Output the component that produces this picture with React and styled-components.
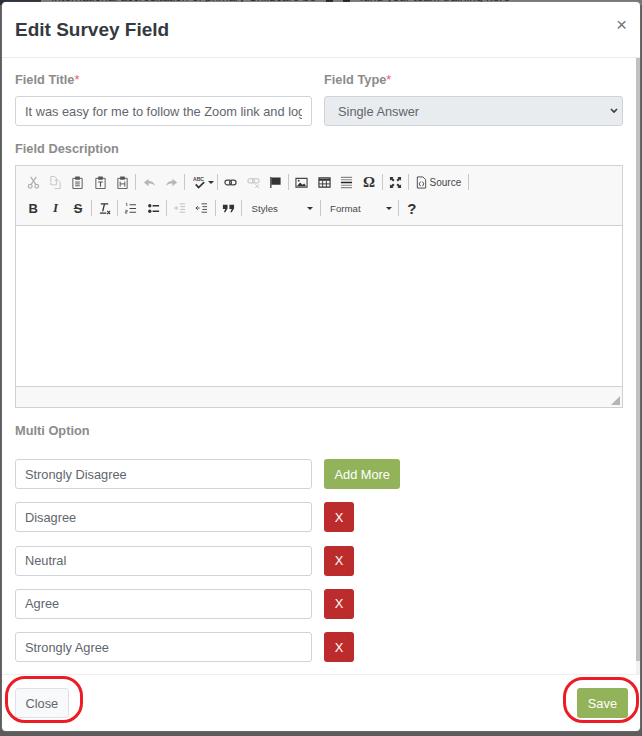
import styled, { createGlobalStyle } from "styled-components";

const GlobalStyle = createGlobalStyle`
    * {
        box-sizing: border-box;
    }
    html, body {
        margin: 0;
        padding: 0;
        height: 736px;
        overflow: hidden;
        background: #5c5c5c;
        font-family: 'Liberation Sans', Arial, sans-serif;
    }
`;

const options = ["Strongly Disagree", "Disagree", "Neutral", "Agree", "Strongly Agree"];

function Tool({ children, faded }) {
    return (
        <ToolSlot>
            <ToolIcon viewBox="0 0 14 14" $faded={faded}>
                {children}
            </ToolIcon>
        </ToolSlot>
    );
}

function Paste({ mark }) {
    return (
        <Tool>
            <path d="M2 2.500h10v11H2z" fill="none" stroke="#555" />
            <path d="M4.500 .5h5v3.500h-5z" fill="#555" />
            {mark}
        </Tool>
    );
}

export default function App() {
    return (
        <Page>
            <GlobalStyle />
            <Backdrop>
                <DarkCorner />
                <BackdropText>International accreditation of primary Childcare be</BackdropText>
                <BackdropMark />
                <BackdropMark />
                <BackdropText>fund your team training here</BackdropText>
            </Backdrop>
            <Modal>
                <Header>
                    <Title>Edit Survey Field</Title>
                    <CloseX>×</CloseX>
                </Header>
                <Body>
                    <Content>
                        <TopRow>
                            <TitleGroup>
                                <Label>Field Title<Star>*</Star></Label>
                                <TextInput readOnly value="It was easy for me to follow the Zoom link and log in to the session" />
                            </TitleGroup>
                            <TypeGroup>
                                <Label>Field Type<Star>*</Star></Label>
                                <SelectBox>
                                    <span>Single Answer</span>
                                    <svg width="8" height="6" viewBox="0 0 8 6">
                                        <path d="M1 1l3 3 3-3" fill="none" stroke="#343a40" strokeWidth="1.600" />
                                    </svg>
                                </SelectBox>
                            </TypeGroup>
                        </TopRow>
                        <Label>Field Description</Label>
                        <Editor>
                            <Toolbar>
                                <ToolRow>
                                    <Tool faded>
                                        <path d="M4 1l5.500 8M10 1L4.500 9" stroke="#444" strokeWidth="1.300" />
                                        <circle cx="3.500" cy="11" r="2" fill="none" stroke="#444" strokeWidth="1.300" />
                                        <circle cx="10.500" cy="11" r="2" fill="none" stroke="#444" strokeWidth="1.300" />
                                    </Tool>
                                    <Tool faded>
                                        <path d="M2 .5h4l2 2v7H2zM6 4.500h3.500l2.500 2.500v6.500H6" fill="none" stroke="#777" />
                                    </Tool>
                                    <Paste mark={<path d="M4.500 6.500h5M4.500 8.500h5M4.500 10.500h5" stroke="#555" />} />
                                    <Paste mark={<path d="M4.500 6.500h5M7 6.500v5" stroke="#555" strokeWidth="1.200" />} />
                                    <Paste mark={<path d="M4.500 6v5.500M9.500 6v5.500M4.500 8.500h5" stroke="#555" />} />
                                    <Separator />
                                    <Tool faded>
                                        <path d="M1 7l5-4v2.500c4 0 6 2 7 5-2-2-4-2.500-7-2.500V11z" fill="#555" />
                                    </Tool>
                                    <Tool faded>
                                        <path d="M13 7L8 3v2.500c-4 0-6 2-7 5 2-2 4-2.500 7-2.500V11z" fill="#555" />
                                    </Tool>
                                    <Separator />
                                    <SpellSlot>
                                        <ToolIcon viewBox="0 0 14 14">
                                            <text x="0" y="5" fontSize="5.500" fontWeight="700" fill="#444" fontFamily="Liberation Sans, sans-serif">ABC</text>
                                            <path d="M3 9l3 3.500L12 6.500" fill="none" stroke="#333" strokeWidth="1.800" />
                                        </ToolIcon>
                                        <Caret />
                                    </SpellSlot>
                                    <Separator />
                                    <Tool>
                                        <rect x="1" y="4.500" width="7" height="5" rx="2.500" fill="none" stroke="#444" strokeWidth="1.300" />
                                        <rect x="6" y="4.500" width="7" height="5" rx="2.500" fill="none" stroke="#444" strokeWidth="1.300" />
                                    </Tool>
                                    <Tool faded>
                                        <rect x="1" y="3" width="7" height="4.500" rx="2" fill="none" stroke="#777" strokeWidth="1.200" />
                                        <rect x="6" y="3" width="7" height="4.500" rx="2" fill="none" stroke="#777" strokeWidth="1.200" />
                                        <path d="M9 9l4 4M13 9l-4 4" stroke="#777" />
                                    </Tool>
                                    <Tool>
                                        <path d="M2 1v12" stroke="#333" strokeWidth="1.300" />
                                        <path d="M2.500 1.500h10v8h-10z" fill="#333" />
                                    </Tool>
                                    <Separator />
                                    <Tool>
                                        <path d="M1 2.500h12v9.500H1z" fill="none" stroke="#444" strokeWidth="1.200" />
                                        <path d="M2 11l3.500-4 2.500 2.500 2-1.500 2 3z" fill="#333" />
                                        <circle cx="4" cy="5" r="1" fill="#333" />
                                    </Tool>
                                    <Tool>
                                        <path d="M1 2h12v10H1z" fill="none" stroke="#333" strokeWidth="1.200" />
                                        <path d="M1 3h12v2H1z" fill="#333" />
                                        <path d="M1 8.500h12M5 5v7M9 5v7" stroke="#333" />
                                    </Tool>
                                    <Tool>
                                        <path d="M1 1.500h12M1 4h12" stroke="#888" strokeWidth="1.200" />
                                        <path d="M1 7h12" stroke="#222" strokeWidth="1.600" />
                                        <path d="M1 10h12M1 12.500h12" stroke="#888" strokeWidth="1.200" />
                                    </Tool>
                                    <OmegaGlyph>Ω</OmegaGlyph>
                                    <Separator />
                                    <Tool>
                                        <path d="M1 1h4L3.800 2.200 6 4.400 4.400 6 2.200 3.800 1 5zM13 1v4l-1.200-1.200L9.600 6 8 4.400l2.200-2.200L9 1zM1 13V9l1.200 1.200L4.400 8 6 9.600l-2.200 2.200L5 13zM13 13H9l1.200-1.200L8 9.600 9.600 8l2.200 2.200L13 9z" fill="#333" />
                                    </Tool>
                                    <Separator />
                                    <SourceSlot>
                                        <ToolIcon viewBox="0 0 14 14">
                                            <path d="M2.500 1h6l3 3v9h-9z" fill="none" stroke="#444" />
                                            <path d="M6 6L4.500 8.500 6 11M8 6l1.500 2.500L8 11" fill="none" stroke="#444" />
                                        </ToolIcon>
                                        <SourceLabel>Source</SourceLabel>
                                    </SourceSlot>
                                    <Separator />
                                </ToolRow>
                                <ToolRow>
                                    <LetterTool>B</LetterTool>
                                    <LetterTool $italic>I</LetterTool>
                                    <LetterTool $strike>S</LetterTool>
                                    <Separator />
                                    <Tool>
                                        <path d="M3 2h8M7 2L5 10M2 12h7" fill="none" stroke="#333" strokeWidth="1.400" />
                                        <path d="M10 9.500l3 3.500M13 9.500l-3 3.500" stroke="#333" strokeWidth="1.100" />
                                    </Tool>
                                    <Separator />
                                    <Tool>
                                        <path d="M6 3h7M6 7h7M6 11h7" stroke="#444" strokeWidth="1.200" />
                                        <path d="M2 1.500h1v3M1.500 9h2v1.500h-2V12h2" fill="none" stroke="#444" strokeWidth=".8" />
                                    </Tool>
                                    <Tool>
                                        <path d="M6 4h7M6 10h7" stroke="#333" strokeWidth="1.500" />
                                        <circle cx="3" cy="4" r="1.800" fill="#333" />
                                        <circle cx="3" cy="10" r="1.800" fill="#333" />
                                    </Tool>
                                    <Separator />
                                    <Tool faded>
                                        <path d="M7 2h6M8 5h5M8 8h5M7 11h6M1 6.500h4M3 4.500l2 2-2 2" fill="none" stroke="#666" />
                                    </Tool>
                                    <Tool>
                                        <path d="M7 2h6M8 5h5M8 8h5M7 11h6M1 6.500h4M3 4.500l-2 2 2 2" fill="none" stroke="#444" />
                                    </Tool>
                                    <Separator />
                                    <Tool>
                                        <path d="M1 3h5v4L3.500 11H2l1.500-3.500H1zM8 3h5v4l-2.500 4H9l1.500-3.500H8z" fill="#333" />
                                    </Tool>
                                    <Separator />
                                    <Combo>
                                        <ComboLabel>Styles</ComboLabel>
                                        <Caret />
                                    </Combo>
                                    <Separator />
                                    <Combo>
                                        <ComboLabel>Format</ComboLabel>
                                        <Caret />
                                    </Combo>
                                    <Separator />
                                    <HelpGlyph>?</HelpGlyph>
                                </ToolRow>
                            </Toolbar>
                            <EditArea />
                            <EditorFooter>
                                <svg width="9" height="9" viewBox="0 0 9 9">
                                    <path d="M9 0v9H0z" fill="#b5b5b5" />
                                </svg>
                            </EditorFooter>
                        </Editor>
                        <SectionLabel>Multi Option</SectionLabel>
                        <OptionList>
                            {options.map((option, i) => (
                                <OptionRow key={option}>
                                    <TextInput readOnly value={option} />
                                    {i === 0 ? <GreenButton>Add More</GreenButton> : <RedButton>X</RedButton>}
                                </OptionRow>
                            ))}
                        </OptionList>
                    </Content>
                    <ScrollTrack>
                        <ScrollThumb />
                    </ScrollTrack>
                </Body>
                <Footer>
                    <FooterAction>
                        <GreyButton>Close</GreyButton>
                        <Ring $top={-12} $bottom={-5} $left={-10} $right={-14} />
                    </FooterAction>
                    <FooterAction>
                        <SaveButton>Save</SaveButton>
                        <Ring $top={-11} $bottom={-5} $left={-14} $right={-11} />
                    </FooterAction>
                </Footer>
            </Modal>
        </Page>
    );
}

const Page = styled.div`
    position: relative;
    width: 642px;
    height: 736px;
    padding: 2px;
    background: #5c5c5c;
    overflow: hidden;
`;
const Backdrop = styled.div`
    position: absolute;
    top: -11px;
    left: 0;
    right: 0;
    height: 16px;
    display: flex;
    align-items: flex-end;
    gap: 10px;
    background: #777777;
`;
const DarkCorner = styled.div`
    width: 41px;
    height: 16px;
    background: #2b3038;
`;
const BackdropText = styled.div`
    font-size: 12px;
    line-height: 16px;
    color: #2a2a2a;
    white-space: nowrap;
`;
const BackdropMark = styled.div`
    width: 7px;
    height: 16px;
    background: #222222;
`;
const Modal = styled.div`
    position: relative;
    width: 638px;
    height: 729px;
    display: flex;
    flex-direction: column;
    background: #ffffff;
    border-radius: 4px;
    box-shadow: 0 0 2px rgba(255, 255, 255, 0.3);
    overflow: hidden;
`;
const Header = styled.div`
    height: 56px;
    flex-shrink: 0;
    display: flex;
    align-items: center;
    justify-content: space-between;
    padding: 0 13px;
    border-bottom: 1px solid #e9ecef;
`;
const Title = styled.div`
    font-size: 19px;
    font-weight: 700;
    color: #343a40;
`;
const CloseX = styled.div`
    font-size: 19px;
    line-height: 19px;
    color: #777777;
    margin-top: -10px;
`;
const Body = styled.div`
    flex: 1;
    min-height: 0;
    display: flex;
`;
const Content = styled.div`
    flex: 1;
    min-width: 0;
    padding: 14px 13px 0 13px;
`;
const ScrollTrack = styled.div`
    width: 4px;
    flex-shrink: 0;
    background: #f1f1f1;
`;
const ScrollThumb = styled.div`
    height: 603px;
    background: #c1c1c1;
`;
const TopRow = styled.div`
    display: flex;
    gap: 12px;
    margin-bottom: 15px;
`;
const TitleGroup = styled.div`
    width: 297px;
    flex-shrink: 0;
`;
const TypeGroup = styled.div`
    flex: 1;
`;
const Label = styled.div`
    font-size: 12.800px;
    line-height: 16px;
    font-weight: 700;
    color: #8c8c8c;
    margin-bottom: 8px;
`;
const Star = styled.span`
    font-weight: 400;
    color: #ee5a6c;
`;
const TextInput = styled.input`
    display: block;
    width: 297px;
    height: 30px;
    padding: 0 9px;
    border: 1px solid #ced4da;
    border-radius: 3px;
    background: #ffffff;
    font-family: 'Liberation Sans', Arial, sans-serif;
    font-size: 12.800px;
    color: #5f666d;
    outline: none;
`;
const SelectBox = styled.div`
    height: 30px;
    display: flex;
    align-items: center;
    justify-content: space-between;
    padding: 0 4px 0 13px;
    border: 1px solid #ced4da;
    border-radius: 3px;
    background: #e9ecef;
    font-size: 12.800px;
    color: #5f666d;
`;
const Editor = styled.div`
    height: 243px;
    display: flex;
    flex-direction: column;
    border: 1px solid #d1d1d1;
    background: #f8f8f8;
`;
const Toolbar = styled.div`
    height: 60px;
    flex-shrink: 0;
    padding: 3px 0 0 6px;
    border-bottom: 1px solid #d1d1d1;
`;
const ToolRow = styled.div`
    height: 26px;
    display: flex;
    align-items: center;
`;
const ToolSlot = styled.div`
    width: 22.400px;
    flex-shrink: 0;
    display: flex;
    align-items: center;
    justify-content: center;
`;
const ToolIcon = styled.svg`
    width: 13px;
    height: 13px;
    flex-shrink: 0;
    opacity: ${(props) => (props.$faded ? 0.4 : 1)};
`;
const SpellSlot = styled.div`
    width: 28.700px;
    flex-shrink: 0;
    display: flex;
    align-items: center;
    gap: 2px;
    padding-left: 6px;
`;
const SourceSlot = styled.div`
    width: 55.800px;
    flex-shrink: 0;
    display: flex;
    align-items: center;
    gap: 2px;
    padding-left: 4px;
`;
const Separator = styled.div`
    width: 1px;
    height: 16px;
    margin: 0 1.500px;
    background: #c8c8c8;
    flex-shrink: 0;
`;
const Caret = styled.div`
    width: 0;
    height: 0;
    border-left: 3px solid transparent;
    border-right: 3px solid transparent;
    border-top: 3px solid #333333;
`;
const OmegaGlyph = styled.div`
    width: 22.400px;
    flex-shrink: 0;
    font-family: 'Liberation Serif', serif;
    font-size: 15px;
    font-weight: 700;
    color: #333333;
    text-align: center;
`;
const SourceLabel = styled.span`
    font-size: 10px;
    color: #474747;
`;
const LetterTool = styled.div`
    width: 22.400px;
    flex-shrink: 0;
    text-align: center;
    font-family: ${(props) => (props.$italic ? "'Liberation Serif', serif" : "'Liberation Sans', sans-serif")};
    font-size: 13px;
    font-weight: 700;
    font-style: ${(props) => (props.$italic ? "italic" : "normal")};
    text-decoration: ${(props) => (props.$strike ? "line-through" : "none")};
    color: #333333;
`;
const Combo = styled.div`
    width: 74.500px;
    flex-shrink: 0;
    display: flex;
    align-items: center;
    justify-content: space-between;
    padding: 0 5px 0 8px;
`;
const ComboLabel = styled.span`
    font-size: 9.700px;
    color: #484848;
`;
const HelpGlyph = styled.div`
    width: 22.400px;
    flex-shrink: 0;
    text-align: center;
    font-size: 15px;
    font-weight: 700;
    color: #333333;
`;
const EditArea = styled.div`
    flex: 1;
    background: #ffffff;
`;
const EditorFooter = styled.div`
    height: 21px;
    flex-shrink: 0;
    display: flex;
    align-items: flex-end;
    justify-content: flex-end;
    padding: 0 2px 2px 0;
    border-top: 1px solid #d1d1d1;
`;
const SectionLabel = styled(Label)`
    margin: 15px 0 20px 0;
`;
const OptionList = styled.div`
    display: flex;
    flex-direction: column;
    gap: 13.250px;
`;
const OptionRow = styled.div`
    display: flex;
    align-items: center;
    gap: 12px;
`;
const BaseButton = styled.button`
    height: 30px;
    padding: 0 9.500px;
    border: 1px solid transparent;
    border-radius: 3px;
    font-family: 'Liberation Sans', Arial, sans-serif;
    font-size: 12.800px;
    color: #ffffff;
`;
const GreenButton = styled(BaseButton)`
    background: #92b35a;
`;
const SaveButton = styled(GreenButton)`
    padding: 0 10px;
`;
const RedButton = styled(BaseButton)`
    width: 30px;
    padding: 0;
    background: #bd2c2c;
`;
const GreyButton = styled(BaseButton)`
    background: #f8f9fa;
    border-color: #dfe2e5;
    color: #5f666d;
`;
const Footer = styled.div`
    height: 57px;
    flex-shrink: 0;
    display: flex;
    align-items: center;
    justify-content: space-between;
    padding: 0 12px 0 13px;
    border-top: 1px solid #eeeeee;
`;
const FooterAction = styled.div`
    position: relative;
    display: flex;
`;
const Ring = styled.div`
    position: absolute;
    top: ${(props) => props.$top}px;
    bottom: ${(props) => props.$bottom}px;
    left: ${(props) => props.$left}px;
    right: ${(props) => props.$right}px;
    border: 3.500px solid #ed1c24;
    border-radius: 20px;
    pointer-events: none;
`;
